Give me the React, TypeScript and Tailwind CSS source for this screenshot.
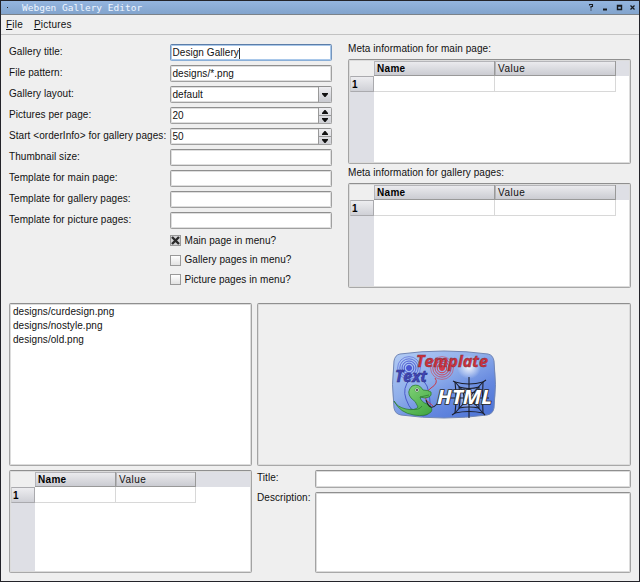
import type { ReactNode } from "react";

const frame = "rounded-[2px] border border-t-[#8f8f8f] border-x-[#a3a3a3] border-b-[#a8a8a8] shadow-[inset_0_0_0_1px_#dcdcdc]";

function Label({ children, className = "" }: { children: ReactNode; className?: string }) {
  return <span className={`block whitespace-nowrap leading-[14px] ${className}`}>{children}</span>;
}

function Arrow({ up = false }: { up?: boolean }) {
  return (
    <svg width="6" height="4" viewBox="0 0 6 4" className="block">
      <path d={up ? "M0 4V3L2.5 0H3.5L6 3V4Z" : "M0 0V1L2.5 4H3.5L6 1V0Z"} fill="#111" />
    </svg>
  );
}

function Field({ value = "", kind = "text", focused = false }: { value?: string; kind?: string; focused?: boolean }) {
  return (
    <div
      className={`flex h-[17px] w-[162px] overflow-hidden rounded-[2px] border bg-white ${
        focused
          ? "border-t-[#5c7da8] border-x-[#7595bd] border-b-[#8aafd8] shadow-[inset_0_0_0_1px_#a9c8ea]"
          : "border-t-[#8f8f8f] border-x-[#a0a0a0] border-b-[#a0a0a0] shadow-[inset_0_0_0_1px_#dedede]"
      }`}
    >
      <div className="flex flex-1 items-center pl-[1.5px] pt-px">
        <span className="whitespace-nowrap leading-[14px]">{value}</span>
        {focused && <span className="h-[11px] w-px bg-[#333]" />}
      </div>
      {kind === "select" && (
        <div className="flex w-[13px] items-center justify-center border-l border-[#999] bg-linear-to-b from-[#eeeef1] to-[#c9cad0]">
          <Arrow />
        </div>
      )}
      {kind === "spin" && (
        <div className="flex w-[13px] flex-col border-l border-[#999] bg-linear-to-b from-[#eeeef1] to-[#cfd0d5]">
          <div className="flex flex-1 items-center justify-center border-b border-[#999]"><Arrow up /></div>
          <div className="flex flex-1 items-center justify-center"><Arrow /></div>
        </div>
      )}
    </div>
  );
}

function Check({ label, checked = false }: { label: string; checked?: boolean }) {
  return (
    <div className="flex h-[19.5px] items-center">
      <div className={`flex h-[11px] w-[11px] items-center justify-center border border-[#999] ${checked ? "bg-[#d4d4d6]" : "bg-linear-to-b from-white to-[#e2e2e2]"}`}>
        {checked && (
          <svg width="9" height="9" viewBox="0 0 9 9"><path d="M1 1L8 8M8 1L1 8" stroke="#2b2b2b" strokeWidth="2.4" /></svg>
        )}
      </div>
      <Label className="ml-[3.5px]">{label}</Label>
    </div>
  );
}

function MetaTable({ wide = false }: { wide?: boolean }) {
  const head = "flex h-[15px] items-center border-b border-r border-[#999] bg-linear-to-b from-[#ededf0] to-[#cbccd2] pl-[3px] shadow-[inset_1px_1px_0_#b5b5b9]";
  const first = wide ? "w-[121px]" : "w-[81px]";
  const second = wide ? "w-[121px]" : "w-[80px]";
  return (
    <div className={`flex h-full overflow-hidden bg-white p-px ${frame}`}>
      <div className="w-[24px] shrink-0 bg-[#dedfe5]">
        <div className="h-[15px] bg-[#efefef]" />
        <div className="flex h-[16px] items-center border border-[#aaaaae] border-l-[#ccc] bg-linear-to-b from-[#ededf0] to-[#cfd0d6] pl-px font-bold text-black">1</div>
      </div>
      <div className="flex-1">
        <div className="flex bg-[#dedfe5]">
          <div className={`${head} ${first} font-bold tracking-[0.3px] text-black`}>Name</div>
          <div className={`${head} ${second} tracking-[0.5px]`}>Value</div>
        </div>
        <div className="flex">
          <div className={`h-[16px] border-b border-r border-[#d8d8d8] ${first}`} />
          <div className={`h-[16px] border-b border-r border-[#d8d8d8] ${second}`} />
        </div>
      </div>
    </div>
  );
}

function Rings({ cx, cy, color }: { cx: number; cy: number; color: string }) {
  return (
    <g fill="none" stroke={color} strokeWidth="1">
      <circle cx={cx} cy={cy} r="2.5" fill={color} />
      <circle cx={cx} cy={cy} r="4.8" />
      <circle cx={cx} cy={cy} r="7" opacity=".9" />
      <circle cx={cx} cy={cy} r="9.2" opacity=".75" />
      <circle cx={cx} cy={cy} r="11.4" opacity=".55" />
    </g>
  );
}

function Logo() {
  return (
    <svg width="105" height="70" viewBox="0 0 105 70" className="overflow-visible">
      <defs>
        <linearGradient id="screen" x1="0" y1="0" x2=".8" y2="1">
          <stop offset="0" stopColor="#b4cdf5" /><stop offset=".45" stopColor="#8faeea" /><stop offset=".75" stopColor="#6487df" /><stop offset="1" stopColor="#5076d6" />
        </linearGradient>
        <radialGradient id="glow"><stop offset="0" stopColor="#fff" stopOpacity=".9" /><stop offset="1" stopColor="#fff" stopOpacity="0" /></radialGradient>
        <linearGradient id="snake" x1="0" y1="0" x2="1" y2="1"><stop offset="0" stopColor="#8fdc83" /><stop offset="1" stopColor="#3ea43f" /></linearGradient>
      </defs>
      <path d="M8 4Q52-2 96 4Q101 5 102 11Q105 35 102 58Q101 64 95 65Q52 71 9 65Q3 64 2 58Q-1 35 2 11Q3 5 8 4Z" fill="url(#screen)" stroke="#7186b5" strokeWidth="1" />
      <circle cx="77" cy="17" r="12" fill="url(#glow)" />
      <Rings cx={17} cy={18} color="#4a55d2" />
      <Rings cx={50} cy={18} color="#d23a4c" />
      <path d="M18 29Q10 38 14 49Q19 64 31 66Q41 65 38 52Q38 44 35 36L29 27" fill="none" stroke="#4a5ac8" strokeWidth="1" />
      <path d="M43 28Q47 33 39 38Q32 43 34 50L41 56" fill="none" stroke="#c93a4a" strokeWidth="1" />
      <circle cx="77" cy="48" r="13" fill="url(#glow)" opacity=".8" />
      <g fill="none" stroke="#1b1e2b" strokeWidth="1.1">
        <path d="M77 27V68M58 48H97M63 32L91 63M91 32L63 63" />
        <path d="M63 32Q77 36 91 32Q90 48 91 63Q77 60 63 63Q65 48 63 32ZM67 37Q77 40 87 37Q86 48 87 58Q77 56 67 58Q69 48 67 37ZM71 42Q77 44 83 42Q82 48 83 54Q77 52 71 54Q73 48 71 42Z" />
        <path d="M63 32L61 31M91 32L94 30M63 63L60 65M91 63L93 65" />
      </g>
      <path d="M2 51Q5 57 14 59Q23 61 26 57Q24 51 19 48Q14 42 20 36Q27 33 31 40Q36 40 39 42Q40 46 37 47Q33 49 28 47Q29 52 35 54Q42 58 39 62Q34 67 22 65Q8 63 2 51Z" fill="url(#snake)" stroke="#2f7b35" strokeWidth=".8" />
      <path d="M28 47L37 45M18 59Q27 61 30 56" fill="none" stroke="#2f7b35" strokeWidth=".8" />
      <circle cx="25" cy="40" r="2" fill="#fff" stroke="#2f7b35" strokeWidth=".5" /><circle cx="25" cy="40" r=".9" fill="#111" />
      <path d="M34 50Q38 62 45 54L50 47" fill="none" stroke="#222" strokeWidth="1.1" />
      <g fontFamily="'Open Sans', 'Noto Sans', sans-serif" fontStyle="italic" fontWeight="bold" letterSpacing="0">
        <text x="24" y="16.5" fontSize="16" textLength="72" lengthAdjust="spacingAndGlyphs" fill="#d2303b" stroke="#7d3140" strokeWidth=".5">Template</text>
        <text x="3" y="32" fontSize="16" textLength="32" lengthAdjust="spacingAndGlyphs" fill="#4147b8" stroke="#2b2e80" strokeWidth=".5">Text</text>
        <text x="45" y="54" fontSize="20" textLength="55" lengthAdjust="spacingAndGlyphs" fill="#fff" stroke="#292929" strokeWidth="1.6" paintOrder="stroke">HTML</text>
      </g>
    </svg>
  );
}

const rows = [
  { label: "Gallery title:", value: "Design Gallery", focused: true },
  { label: "File pattern:", value: "designs/*.png" },
  { label: "Gallery layout:", value: "default", kind: "select" },
  { label: "Pictures per page:", value: "20", kind: "spin" },
  { label: "Start <orderInfo> for gallery pages:", value: "50", kind: "spin" },
  { label: "Thumbnail size:" },
  { label: "Template for main page:" },
  { label: "Template for gallery pages:" },
  { label: "Template for picture pages:" },
];

export default function App() {
  return (
    <div className="flex h-[582px] w-[640px] flex-col overflow-hidden border border-[#232329] bg-[#efefef] font-['Liberation_Sans',Arial,sans-serif] text-[10px] tracking-[0.06px] text-[#111]">
      <header className="flex h-[14px] shrink-0 items-center border-b border-[#7b8289] bg-linear-to-b from-[#94b5df] to-[#82a4cd]">
        <span className="ml-[6px] h-px w-px bg-[#222]" />
        <h1 className="ml-[14px] whitespace-nowrap font-['DejaVu_Sans_Mono',monospace] text-[9.5px] leading-[12px] tracking-normal text-[#eef5ff]">Webgen Gallery Editor</h1>
        <svg className="ml-auto mr-[3px]" width="48" height="9" viewBox="0 0 48 9" fill="none" stroke="#16191e">
          <path d="M1.5 2.5V1.5H4.5V3.5H3V5.5M3 6.5V7.5" strokeWidth="1.1" />
          <path d="M15 6.5H19" strokeWidth="2" />
          <path d="M29.5 2.5H33.5V6.5H29.5ZM29 3H34" strokeWidth="1.4" />
          <path d="M42.5 2.5L46.5 6.5M46.5 2.5L42.5 6.5" strokeWidth="1.2" />
        </svg>
      </header>
      <nav className="flex h-[20px] shrink-0 items-center gap-[11px] border-b border-[#c2c2c2] pl-[5px] tracking-[0.2px]">
        <Label><u className="underline-offset-1">F</u>ile</Label>
        <Label><u className="underline-offset-1">P</u>ictures</Label>
      </nav>
      <main className="flex flex-1 flex-col pl-[8px] pr-[8px]">
        <section className="flex h-[268px] shrink-0">
          <div className="w-[323px] pt-[9px]">
            {rows.map((row) => (
              <div key={row.label} className="flex h-[21px]">
                <Label className="w-[161px] pt-px">{row.label}</Label>
                <Field value={row.value} kind={row.kind} focused={row.focused} />
              </div>
            ))}
            <div className="-mt-[2px] ml-[161px]">
              <Check label="Main page in menu?" checked />
              <Check label="Gallery pages in menu?" />
              <Check label="Picture pages in menu?" />
            </div>
          </div>
          <div className="ml-[16px] w-[284px] pt-[7px]">
            <Label>Meta information for main page:</Label>
            <div className="mt-[3px] h-[105px]"><MetaTable wide /></div>
            <Label className="mt-[2px]">Meta information for gallery pages:</Label>
            <div className="mt-[3px] h-[105px]"><MetaTable wide /></div>
          </div>
        </section>
        <section className="flex h-[163px] shrink-0 gap-[5px]">
          <div className={`w-[243px] bg-white pl-[3px] pt-px ${frame}`}>
            <Label>designs/curdesign.png</Label>
            <Label>designs/nostyle.png</Label>
            <Label>designs/old.png</Label>
          </div>
          <div className={`flex flex-1 items-center justify-center ${frame}`}><Logo /></div>
        </section>
        <section className="mt-[4px] flex h-[103px] shrink-0">
          <div className="w-[243px]"><MetaTable /></div>
          <div className="ml-[5px] w-[58px]">
            <Label className="pt-px">Title:</Label>
            <Label className="mt-[6px]">Description:</Label>
          </div>
          <div className="flex flex-1 flex-col gap-[4px]">
            <div className={`h-[18px] bg-white ${frame}`} />
            <div className={`flex-1 bg-white ${frame}`} />
          </div>
        </section>
      </main>
    </div>
  );
}
